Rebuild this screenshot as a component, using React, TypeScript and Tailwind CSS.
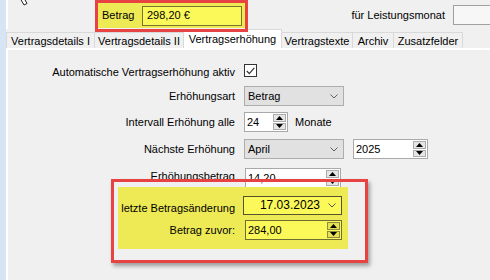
import React from "react";

const Chevron = ({ color = "#606060" }: { color?: string }) => (
  <svg width="8" height="5" viewBox="0 0 8 5" className="shrink-0">
    <polyline points="0.5,0.5 4,4 7.5,0.5" fill="none" stroke={color} strokeWidth="1" />
  </svg>
);

const Tri = ({ up }: { up: boolean }) => (
  <svg width="7" height="4" viewBox="0 0 7 4">
    <polygon points={up ? "0,4 3.5,0 7,4" : "0,0 3.5,4 7,0"} fill="#000" />
  </svg>
);

const Spinner = ({ yellow = false }: { yellow?: boolean }) => (
  <div className="flex flex-col w-[13px] h-full py-[1px] mr-[1px] gap-[1px]">
    <div
      className={`flex-1 flex items-center justify-center border ${
        yellow ? "bg-[#e6e253] border-[#8e8b3c]" : "bg-[#e5e5e5] border-[#acacac]"
      }`}
    >
      <Tri up />
    </div>
    <div
      className={`flex-1 flex items-center justify-center border ${
        yellow ? "bg-[#e6e253] border-[#8e8b3c]" : "bg-[#e5e5e5] border-[#acacac]"
      }`}
    >
      <Tri up={false} />
    </div>
  </div>
);

const Combo = ({ text, w }: { text: string; w: string }) => (
  <div className={`${w} h-full flex items-center justify-between bg-[#e1e1e1] border border-[#adadad] pl-[3px] pr-[5px]`}>
    <span>{text}</span>
    <Chevron />
  </div>
);

const Num = ({ text, w, yellow = false }: { text: string; w: string; yellow?: boolean }) => (
  <div
    className={`${w} h-full flex items-stretch border ${
      yellow ? "bg-[#fbf85a] border-[#6f6d30]" : "bg-white border-[#a9a9a9]"
    }`}
  >
    <span className="flex-1 pl-[2px] pt-[1px] leading-[16px]">{text}</span>
    <Spinner yellow={yellow} />
  </div>
);

const Label = ({ children }: { children: React.ReactNode }) => (
  <div className="w-[227px] text-right">{children}</div>
);

export default function App() {
  return (
    <div className="w-[490px] h-[280px] overflow-hidden relative flex bg-[#f0f0f0] text-[11px] text-black font-['Liberation_Sans',Arial,sans-serif] leading-[13px]">
      <div className="w-[6px] shrink-0 bg-[#d7e4f4]" />
      <div className="flex-1 flex flex-col min-w-0">
        {/* header */}
        <div className="h-[29px] shrink-0 flex items-start border-l-2 border-white">
          <div className="ml-[90px] mt-[3px] w-[147px] h-[25px] bg-[#eeea56] flex items-center">
            <span className="ml-[4px]">Betrag</span>
            <div className="ml-auto mr-[3px] w-[100px] h-[20px] border border-[#77752f] bg-[#fbf85a] flex items-center pl-[4px]">
              298,20 €
            </div>
          </div>
          <div className="ml-auto mt-[5px] h-[20px] flex items-center">
            <span className="mr-[8px]">für Leistungsmonat</span>
            <div className="w-[37px] h-[20px] border border-r-0 border-[#a0a0a0] bg-[#f7f7f7]" />
          </div>
        </div>
        {/* tabs */}
        <div className="h-[19px] shrink-0 flex items-end">
          <div className="w-[88px] h-[16px] border-l border-t border-[#d9d9d9] flex items-center justify-center pt-[2px]">
            Vertragsdetails I
          </div>
          <div className="w-[89px] h-[16px] border-l border-t border-[#d9d9d9] flex items-center justify-center pt-[2px]">
            Vertragsdetails II
          </div>
          <div className="w-[99px] h-[19px] border-l border-t border-r border-[#d9d9d9] bg-white flex items-center justify-center">
            Vertragserhöhung
          </div>
          <div className="w-[71px] h-[16px] border-r border-t border-[#d9d9d9] flex items-center justify-center pt-[2px]">
            Vertragstexte
          </div>
          <div className="w-[41px] h-[16px] border-r border-t border-[#d9d9d9] flex items-center justify-center pt-[2px]">
            Archiv
          </div>
          <div className="w-[69px] h-[16px] border-r border-t border-[#d9d9d9] flex items-center justify-center pt-[2px]">
            Zusatzfelder
          </div>
        </div>
        {/* panel */}
        <div className="flex-1 flex flex-col border-l-2 border-t-2 border-white">
          <div className="mt-[14px] h-[13px] flex items-center">
            <div className="pt-[3px]">
              <Label>Automatische Vertragserhöhung aktiv</Label>
            </div>
            <div className="ml-[9px] w-[13px] h-[13px] border border-[#333] bg-white flex items-center justify-center">
              <svg width="9" height="8" viewBox="0 0 9 8">
                <polyline points="0.8,4 3.3,6.6 8.3,0.8" fill="none" stroke="#333" strokeWidth="1.2" />
              </svg>
            </div>
          </div>
          <div className="mt-[9px] h-[20px] flex items-center">
            <Label>Erhöhungsart</Label>
            <div className="ml-[9px] h-full">
              <Combo text="Betrag" w="w-[100px]" />
            </div>
          </div>
          <div className="mt-[6px] h-[20px] flex items-center">
            <Label>Intervall Erhöhung alle</Label>
            <div className="ml-[9px] h-full">
              <Num text="24" w="w-[44px]" />
            </div>
            <span className="ml-[7px]">Monate</span>
          </div>
          <div className="mt-[7px] h-[20px] flex items-center">
            <Label>Nächste Erhöhung</Label>
            <div className="ml-[9px] h-full">
              <Combo text="April" w="w-[100px]" />
            </div>
            <div className="ml-[9px] h-full">
              <Num text="2025" w="w-[75px]" />
            </div>
          </div>
          <div className="mt-[9px] h-[19px] flex items-start">
            <div className="pt-[2px]">
              <Label>Erhöhungsbetrag</Label>
            </div>
            <div className="ml-[10px] h-[20px]">
              <Num text="14,20" w="w-[96px]" />
            </div>
          </div>
          {/* highlighted block */}
          <div className="ml-[110px] w-[230px] h-[62px] bg-[#eeea56] flex flex-col pt-[9px]">
            <div className="h-[19px] flex items-center">
              <div className="w-[117px] text-right pt-[6px]">letzte Betragsänderung</div>
              <div className="ml-[8px] w-[99px] h-full border border-[#55532a] bg-[#fbf85a] flex items-center justify-end pr-[5px] gap-[8px]">
                <span className="text-[12px]">17.03.2023</span>
                <Chevron color="#555" />
              </div>
            </div>
            <div className="mt-[5px] h-[20px] flex items-center">
              <div className="w-[117px] text-right">Betrag zuvor:</div>
              <div className="ml-[10px] h-full">
                <Num text="284,00" w="w-[97px]" yellow />
              </div>
            </div>
          </div>
        </div>
      </div>

      {/* mouse pointer remnant */}
      <svg className="absolute left-[19px] top-0" width="12" height="7" viewBox="0 0 12 7">
        <path d="M1,-2 L5,5 L8,3.5 L5,-2" fill="#fff" stroke="#222" strokeWidth="1" />
      </svg>

      {/* annotation boxes */}
      <div className="absolute left-[95px] top-0 w-[153px] h-[32px] border-[3px] border-[#e84343]" />
      <div className="absolute left-[111px] top-[179px] w-[257px] h-[84px] border-[3px] border-[#e84343] shadow-[2px_3px_4px_rgba(0,0,0,0.35)]" />
    </div>
  );
}
